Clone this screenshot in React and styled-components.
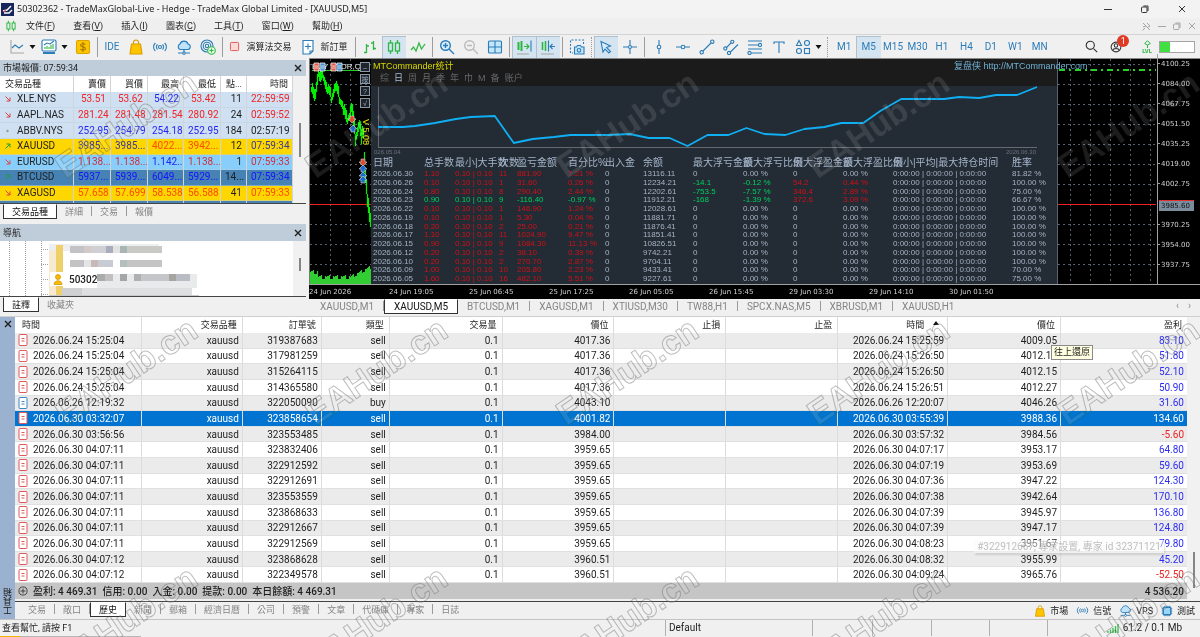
import React from "react";
import styled, { createGlobalStyle, css } from "styled-components";

const ui = `Roboto, "Noto Sans CJK TC", sans-serif`;
const chartFont = `"Liberation Sans", "Noto Sans CJK SC", sans-serif`;
const blue = "#2b7cb8";
const green = "#2db742";

const Global = createGlobalStyle`
  * { box-sizing: border-box; }
  body { margin: 0; background: #f0f0f0; color: #1e1e1e; font: 10px/12px ${ui}; overflow-x: hidden; }
  button, input { font: inherit; color: inherit; }
  button { border: 0; padding: 0; margin: 0; background: none; }
  svg { display: block; flex: none; }
  table { border-collapse: separate; border-spacing: 0; }
  th { font-weight: 400; }
`;

const Window = styled.div`
  position: relative;
  min-height: 100vh;
  display: flex;
  flex-direction: column;
  overflow: hidden;
`;

/* ---------- title, menu ---------- */
const TitleBar = styled.header`
  display: flex;
  align-items: center;
  height: 18px;
  padding: 0 14px 0 1px;
  gap: 3px;
  background: #f3f3f3;
  h1 { margin: 0; font: 9px/16px "Noto Sans", sans-serif; flex: 1; }
`;
const WinButtons = styled.div`
  display: flex;
  gap: ${(p) => p.$gap}px;
  color: ${(p) => p.$color};
`;
const MenuBar = styled.nav`
  display: flex;
  align-items: center;
  height: 16px;
  padding: 0 4px 0 5px;
  background: #efefef;
  font-size: 9px;
`;
const MenuButton = styled.button`
  margin-left: ${(p) => (p.$first ? 9 : 18)}px;
  line-height: 14px;
`;
const Push = styled.div`flex: 1;`;

/* ---------- toolbar ---------- */
const Toolbar = styled.div`
  display: flex;
  align-items: center;
  height: 24px;
  padding: 0 5px 0 6px;
  border-top: 1px solid #d4d4d4;
  background: #f0f0f0;
  color: ${blue};
`;
const ToolButton = styled.button`
  display: flex;
  align-items: center;
  justify-content: center;
  gap: ${(p) => p.$gap || 0}px;
  width: ${(p) => p.$w || 24}px;
  height: 22px;
  flex: ${(p) => (p.$grow ? "1 1 0" : "none")};
  white-space: nowrap;
  font-size: ${(p) => (p.$dark ? 9 : 10)}px;
  color: ${(p) => (p.$dark ? "#1e1e1e" : blue)};
  ${(p) => p.$on && css`background: #d5e4f1; box-shadow: inset 1px 1px 0 #b3bfcb;`}
`;
const Sep = styled.span`
  width: 1px;
  height: 20px;
  margin: 0 2px;
  border-left: 1px ${(p) => (p.$dots ? "dotted" : "solid")} #9c9c9c;
`;
const Frames = styled.div`
  display: flex;
  width: 220px;
  margin-left: 2px;
`;
const Account = styled.div`
  position: relative;
  margin: 0 20px 0 12px;
  color: #333;
`;
const Badge = styled.span`
  position: absolute;
  left: 7px;
  top: -6px;
  width: 12px;
  height: 12px;
  border-radius: 6px;
  background: #e03a24;
  color: #fff;
  text-align: center;
  font-size: 9px;
`;
const Level = styled.div`
  display: flex;
  flex-direction: column;
  align-items: center;
  margin-right: 7px;
  color: ${green};
  font: bold 6px/6px ${ui};
`;
const Battery = styled.div`
  width: 36px;
  height: 12px;
  border: 1px solid #a5a5a5;
  background: linear-gradient(90deg, #41df41 10px, #fff 10px);
`;

/* ---------- middle area ---------- */
const Main = styled.main`
  display: flex;
  height: 258px;
`;
const Side = styled.aside`
  width: 306px;
  margin-right: 3px;
  display: flex;
  flex-direction: column;
  padding-top: 2px;
`;
const PanelTitle = styled.h2`
  display: flex;
  align-items: center;
  justify-content: space-between;
  height: ${(p) => p.$h}px;
  margin: 0;
  padding: 0 4px 0 3px;
  background: #bfcddb;
  font: 9px/14px ${ui};
`;
const PanelBody = styled.div`
  display: flex;
  height: ${(p) => p.$h}px;
  overflow: hidden;
  background: #fff;
  border-bottom: 1px solid #444;
`;
const Track = styled.div`
  width: 13px;
  flex: none;
  background: #f1f1f1;
  padding: ${(p) => p.$top}px 0 0 6px;
`;
const Thumb = styled.div`
  width: 2px;
  height: ${(p) => p.$h}px;
  background: #858585;
`;
const Quotes = styled.table`
  width: 293px;
  height: 141px;
  flex: none;
  table-layout: fixed;
  th, td {
    padding: 0 4px;
    text-align: right;
    overflow: hidden;
    white-space: nowrap;
    line-height: 14px;
    border-right: 1px solid #d4d4d4;
  }
  th { height: 16px; font-size: 9px; background: #fff; }
  th:first-child, td:first-child { text-align: left; padding-left: 5px; }
`;
const QuoteRow = styled.tr`
  background: ${(p) => p.$bg};
  td { border-bottom: 1px solid rgba(190, 205, 220, 0.5); }
`;
const SymbolCell = styled.span`
  display: flex;
  align-items: center;
  gap: 6px;
`;
const Num = styled.td`color: ${(p) => p.$c};`;
const Tabs = styled.div`
  display: flex;
  align-items: flex-start;
  height: ${(p) => p.$h}px;
  padding-left: ${(p) => p.$left}px;
  font-size: ${(p) => p.$size}px;
`;
const Tab = styled.button`
  position: relative;
  height: 15px;
  padding: 0 ${(p) => p.$pad || 8}px;
  color: #858585;
  line-height: 14px;
  border-right: 1px solid transparent;
  white-space: nowrap;
  &:not(:last-of-type)::after {
    content: "";
    position: absolute;
    right: -1px;
    top: 2px;
    height: 10px;
    border-right: 1px solid #9a9a9a;
  }
  ${(p) => p.$on && css`
    background: #fff;
    color: #111;
    border: 1px solid #333;
    border-top-color: #fff;
    &::after { display: none; }
  `}
`;

/* ---------- chart ---------- */
const ChartColumn = styled.section`
  flex: 1;
  min-width: 0;
  display: flex;
  flex-direction: column;
  border-top: 1px solid #888;
`;
const Chart = styled.div`
  display: grid;
  grid-template-columns: 62px minmax(0, 1fr) 99px 43px;
  grid-template-rows: 225px 15px;
  background: #000;
`;
const LeftPlot = styled.div`
  position: relative;
  border-left: 1px solid #777;
`;
const PlotButtons = styled.div`
  position: absolute;
  right: 1px;
  top: 3px;
  display: grid;
  gap: 2px;
  button {
    width: 10px;
    height: 10px;
    border: 1px solid #8b98a8;
    background: #1d242c;
    color: #9fb0c4;
    font: 7px/7px ${chartFont};
  }
`;
const Version = styled.span`
  position: absolute;
  right: 1px;
  top: 60px;
  writing-mode: vertical-rl;
  color: #e6e600;
  font: 9px/9px ${chartFont};
`;
const Stats = styled.div`
  display: flex;
  flex-direction: column;
  height: 225px;
  background: #232b34;
  border-right: 1px solid #59626e;
  font-family: ${chartFont};
  clip-path: inset(0 -40px 0 0);
`;
const StatsHead = styled.div`
  height: 27px;
  flex: none;
  padding: 2px 0 0 2px;
  background: #1b1b1b;
`;
const StatsTitle = styled.div`
  display: flex;
  justify-content: space-between;
  font-size: 9px;
  line-height: 11px;
  color: #d8d800;
  a { width: 103px; color: #6fb0d4; text-decoration: none; white-space: nowrap; }
`;
const StatsModes = styled.div`
  display: flex;
  gap: 5px;
  padding-left: 7px;
  color: #66686c;
  font-size: 9px;
  line-height: 13px;
  button:nth-child(2) { color: #a9bdd4; }
`;
const Dates = styled.div`
  display: flex;
  justify-content: space-between;
  padding: 0 21px 0 3px;
  color: #68727f;
  font-size: 6px;
  line-height: 8px;
`;
const StatsTable = styled.table`
  width: 100%;
  table-layout: fixed;
  color: #a5b3c4;
  font-size: 8px;
  line-height: 8px;
  th, td { padding: 0; text-align: left; white-space: nowrap; }
  td { height: 9px; }
  tr:nth-child(4n) td { height: 8px; }
  th { height: 13px; font-size: 10px; line-height: 13px; color: #a5b5ca; }
  th:first-child, td:first-child { padding-left: 2px; }
`;
const Tone = styled.td`color: ${(p) => p.$c};`;
const PriceAxis = styled.div`
  display: flex;
  flex-direction: column;
  border-left: 1px solid #a0a0a0;
  color: #d0d0d0;
  font: 7px/20px "DejaVu Sans", sans-serif;
  margin-top: -5px;
  span::before { content: ""; display: inline-block; width: 2px; height: 1px; margin-right: 1px; background: #a0a0a0; vertical-align: 2px; }
`;
const LastPrice = styled.b`
  font-weight: 400;
  line-height: 10px;
  margin: 6px 6px 4px 1px;
  padding-left: 2px;
  background: #7b8c9c;
  border-top: 1px solid #e03030;
  color: #111;
`;
const TimeAxis = styled.div`
  grid-column: 1 / -1;
  display: flex;
  border-top: 1px solid #a0a0a0;
  color: #d0d0d0;
  font: 7px/14px "DejaVu Sans", sans-serif;
  span { width: 80px; }
`;
const Arrows = styled.div`
  margin-left: auto;
  display: flex;
  gap: 9px;
  padding: 1px 9px 0 0;
  color: #8c8c8c;
`;

/* ---------- toolbox ---------- */
const Toolbox = styled.section`
  display: flex;
  height: 303px;
  border-top: 1px solid #cfcfcf;
`;
const Strip = styled.div`
  width: 15px;
  display: flex;
  flex-direction: column;
  justify-content: space-between;
  align-items: center;
  padding: 3px 0 4px;
  background: #9ab2cf;
  span { writing-mode: vertical-rl; transform: rotate(180deg); font-size: 9px; }
`;
const ToolboxBody = styled.div`
  flex: 1;
  min-width: 0;
  display: flex;
  flex-direction: column;
`;
const Scroller = styled.div`
  display: flex;
  background: #fff;
`;
const History = styled.table`
  flex: 1;
  table-layout: fixed;
  height: 282px;
  th, td {
    padding: 0 3px;
    text-align: right;
    white-space: nowrap;
    line-height: 13px;
    border-right: 1px solid #dcdcdc;
  }
  th { height: 16px; font-size: 9px; background: #fff; position: relative; padding-right: 5px; }
  th:first-child { text-align: left; padding-left: 7px; }
  td:first-child { text-align: left; }
  th:last-child, td:last-child { border-right: 0; }
`;
const SortMark = styled.span`
  display: inline-block;
  margin: 0 3px 3px 9px;
  border: 3px solid transparent;
  border-top: 0;
  border-bottom: 4px solid #111;
`;
const Deal = styled.tr`
  background: ${(p) => (p.$sel ? "#0173d0" : p.$alt ? "#ebebeb" : "#fff")};
  color: ${(p) => (p.$sel ? "#fff" : "inherit")};
  td { border-bottom: 1px solid #e0e0e0; position: relative; }
`;
const TimeCell = styled.span`
  display: flex;
  align-items: center;
  gap: 5px;
`;
const Profit = styled.td`
  color: ${(p) => (p.$sel ? "#fff" : p.$neg ? "#f02020" : "#2c2cf4")};
`;
const Total = styled.tr`
  background: #c5c5c5;
  font-weight: 500;
  td { height: 16px; border: 0; }
`;
const Tip = styled.div`
  position: absolute;
  z-index: 2;
  left: -10px;
  top: 28px;
  height: 15px;
  padding: 0 2px;
  border: 1px solid #8a8a8a;
  background: #ffffe1;
  font-size: 9px;
  line-height: 13px;
`;
const Ghost = styled.div`
  position: absolute;
  z-index: 2;
  left: 26px;
  top: 4px;
  padding: 0 3px;
  line-height: 13px;
  background: rgba(250, 250, 250, 0.5);
  box-shadow: 1px 2px 2px rgba(0, 0, 0, 0.12);
  color: rgba(150, 150, 150, 0.6);
`;
const BottomBar = styled.div`
  display: flex;
  margin-top: 2px;
  border-top: 1px solid #444;
  background: #f0f0f0;
`;
const Links = styled.div`
  margin-left: auto;
  display: flex;
  align-items: center;
  gap: 8px;
  padding-right: 5px;
  font-size: 9px;
  button { display: flex; align-items: center; gap: 4px; white-space: nowrap; }
`;
const StatusBar = styled.footer`
  display: flex;
  height: 17px;
  border-top: 1px solid #c4c4c4;
  line-height: 16px;
  font-size: 9px;
  > * { border-left: 1px solid #b0b0b0; padding-left: 3px; }
  > :first-child { flex: 1; border: 0; padding-left: 2px; }
`;
const StatusCell = styled.div`
  width: ${(p) => p.$w}px;
  display: flex;
  align-items: center;
  gap: 4px;
  padding-right: ${(p) => p.$end || 0}px;
  font-size: 10px;
`;
const EdgeStrip = styled.div`
  height: 1px;
  background: linear-gradient(90deg, #f5b400 20px, #b8b8b8 20px, #b8b8b8 141px, #f0f0f0 141px);
`;
const Watermark = styled.svg`
  position: absolute;
  inset: 0;
  z-index: 5;
  pointer-events: none;
  mix-blend-mode: ${(p) => p.$mode};
  text { font: bold 34px "Liberation Sans", sans-serif; text-anchor: middle; dominant-baseline: central; }
`;

/* ---------- icons ---------- */
const Icon = ({ s = 16, c = blue, f = "none", w = 1.1, children }) => (
  <svg width={s} height={s} viewBox="0 0 16 16" fill={f} stroke={c} strokeWidth={w} aria-hidden="true">{children}</svg>
);
const Caret = () => (
  <svg width="7" height="4" viewBox="0 0 7 4" fill="#111"><path d="M.5 0h6L3.500 4z" /></svg>
);
const Cross = ({ s = 8, w = 1.4 }) => (
  <svg width={s} height={s} viewBox="0 0 8 8" stroke="currentColor" strokeWidth={w}><path d="M1 1l6 6M7 1L1 7" /></svg>
);
const CloseButton = () => <button aria-label="關閉"><Cross /></button>;
const Minimize = () => <svg width="8" height="8" viewBox="0 0 8 8" stroke="currentColor"><path d="M0 4.500h8" /></svg>;
const Restore = () => (
  <svg width="8" height="8" viewBox="0 0 8 8" fill="none" stroke="currentColor"><rect x=".5" y="2" width="5.500" height="5.500" rx="1" /><path d="M2.500 1h4.500v5" /></svg>
);
const Bag = ({ s = 16 }) => (
  <Icon s={s} c="#d99a00"><path d="M5.500 6V3.500a2.500 2.500 0 015 0V6" /><path fill="#fdc500" d="M3.500 5h9l1.500 10H2z" /></Icon>
);
const Signal = ({ s = 16 }) => (
  <Icon s={s}><circle cx="8" cy="8" r="1.500" /><path d="M5.500 5.500a3.500 3.500 0 000 5M10.500 5.500a3.500 3.500 0 010 5M3.300 4a5.500 5.500 0 000 8M12.700 4a5.500 5.500 0 010 8" /></Icon>
);
const Cloud = ({ s = 16 }) => (
  <Icon s={s}><path fill="#bfe3fa" d="M4 10.500a3 3 0 010-5.500 4.200 4.200 0 018 0 2.800 2.800 0 010 5.500z" /><path d="M8 10.500v3M2 14h4M10 14h4" /><circle cx="8" cy="14" r="1.300" /></Icon>
);
const Chip = () => (
  <Icon s={12}><rect x="3" y="3" width="10" height="10" rx="1" fill="#9bd5f7" strokeWidth="1.800" /><path d="M5 3V1M8 3V1M11 3V1M5 15v-2M8 15v-2M11 15v-2M1 5h2M1 8h2M1 11h2M13 5h2M13 8h2M13 11h2" /></Icon>
);
const Candles = ({ s = 16 }) => (
  <Icon s={s} c={green} w={1.3}><rect x="2.500" y="4" width="4" height="8" /><rect x="9.500" y="4" width="4" height="8" /><path d="M4.500 1v3M4.500 12v3M11.500 1v3M11.500 12v3" /></Icon>
);
const DealIcon = ({ c }) => (
  <svg width="10" height="12" viewBox="0 0 10 12" fill="#fff" stroke={c}><rect x="1" y=".5" width="8" height="11" rx="1" /><path d="M3.500 4.500h3M3.500 7h3" /></svg>
);
const Direction = ({ d }) => (
  <svg width="6" height="6" viewBox="0 0 6 6" fill="none" stroke={d === "up" ? "#1c9f3a" : "#e04040"}>
    {d === "up" && <path d="M.5 5.500L5 1M1.500 1H5v3.500" />}
    {d === "down" && <path d="M.5 .5L5 5M1.500 5H5V1.500" />}
    {d === "flat" && <circle cx="2.500" cy="3" r="1.200" fill="#999" stroke="none" />}
  </svg>
);

/* ---------- data ---------- */
const R = "#f02424", B = "#2424f4", K = "#1e1e1e";
const quotes = [
  ["down", "XLE.NYS", "#cfe0f2", [["53.51", R], ["53.62", R], ["54.22", B], ["53.42", R], ["11", K], ["22:59:59", R]]],
  ["down", "AAPL.NAS", "#cfe0f2", [["281.24", R], ["281.48", R], ["281.54", R], ["280.92", R], ["24", K], ["02:59:52", R]]],
  ["flat", "ABBV.NYS", "#cfe0f2", [["252.95", B], ["254.79", B], ["254.18", B], ["252.95", B], ["184", K], ["02:57:19", K]]],
  ["up", "XAUUSD", "#ffd700", [["3985...", "#3a3a9a"], ["3985...", "#3a3a9a"], ["4022...", "#ff4a00"], ["3942...", "#ff4a00"], ["12", K], ["07:59:34", "#3a3a9a"]]],
  ["down", "EURUSD", "#87cefa", [["1.138...", "#d03040"], ["1.138...", "#d03040"], ["1.142...", B], ["1.138...", "#d03040"], ["1", K], ["07:59:33", "#d03040"]]],
  ["up", "BTCUSD", "#4682b4", [["5937...", "#1414ff"], ["5939...", "#1414ff"], ["6049...", "#1414ff"], ["5929...", "#1414ff"], ["14...", K], ["07:59:34", "#1414ff"]]],
  ["down", "XAGUSD", "#ffd700", [["57.658", "#ff4a00"], ["57.699", "#ff4a00"], ["58.538", "#ff4a00"], ["56.588", "#ff4a00"], ["41", K], ["07:59:33", "#ff4a00"]]],
  ["", "\u00a0", "#4682b4", [["", K], ["", K], ["", K], ["", K], ["", K], ["", K]]],
];

const z = ["0", "0.00 %", "0", "0.00 %"];
const stats = [
  ["2026.06.30", "1.10", "11", "881.90", "7.21 %", "13116.11", z, "81.82 %"],
  ["2026.06.26", "0.10", "1", "31.60", "0.26 %", "12234.21", ["-14.1", "-0.12 %", "54.2", "0.44 %"], "100.00 %"],
  ["2026.06.24", "0.80", "8", "290.40", "2.44 %", "12202.61", ["-753.5", "-7.57 %", "346.4", "2.89 %"], "75.00 %"],
  ["2026.06.23", "0.90", "9", "-116.40", "-0.97 %", "11912.21", ["-168", "-1.39 %", "372.6", "3.09 %"], "66.67 %"],
  ["2026.06.22", "0.10", "1", "146.90", "1.24 %", "12028.61", z, "100.00 %"],
  ["2026.06.19", "0.10", "1", "5.30", "0.04 %", "11881.71", z, "100.00 %"],
  ["2026.06.18", "0.20", "2", "25.00", "0.21 %", "11876.41", z, "100.00 %"],
  ["2026.06.17", "1.10", "11", "1024.90", "9.47 %", "11851.41", z, "100.00 %"],
  ["2026.06.15", "0.90", "9", "1084.30", "11.13 %", "10826.51", z, "100.00 %"],
  ["2026.06.12", "0.20", "2", "38.10", "0.39 %", "9742.21", z, "100.00 %"],
  ["2026.06.10", "0.20", "2", "270.70", "2.87 %", "9704.11", z, "100.00 %"],
  ["2026.06.09", "1.00", "10", "205.80", "2.23 %", "9433.41", z, "70.00 %"],
  ["2026.06.05", "1.60", "16", "482.10", "5.51 %", "9227.61", z, "75.00 %"],
  ["2026.06.04", "0.90", "9", "-158.70", "-1.78 %", "8745.51", z, "50.00 %"],
];
const statHeads = ["日期", "总手数", "最小|大手数", "次数", "盈亏金额", "百分比%", "出入金", "余额", "最大浮亏金额", "最大浮亏比例", "最大浮盈金额", "最大浮盈比例", "最小|平均|最大持仓时间", "胜率"];
const statCols = [53, 31, 44, 18, 51, 37, 38, 50, 50, 50, 50, 50, 119];

const deals = [
  ["2026.06.24 15:25:04", "319387683", "sell", "4017.36", "2026.06.24 15:25:59", "4009.05", "83.10"],
  ["2026.06.24 15:25:04", "317981259", "sell", "4017.36", "2026.06.24 15:26:50", "4012.18", "51.80"],
  ["2026.06.24 15:25:04", "315264115", "sell", "4017.36", "2026.06.24 15:26:50", "4012.15", "52.10"],
  ["2026.06.24 15:25:04", "314365580", "sell", "4017.36", "2026.06.24 15:26:51", "4012.27", "50.90"],
  ["2026.06.26 12:19:32", "322050090", "buy", "4043.10", "2026.06.26 12:20:07", "4046.26", "31.60"],
  ["2026.06.30 03:32:07", "323858654", "sell", "4001.82", "2026.06.30 03:55:39", "3988.36", "134.60"],
  ["2026.06.30 03:56:56", "323553485", "sell", "3984.00", "2026.06.30 03:57:32", "3984.56", "-5.60"],
  ["2026.06.30 04:07:11", "323832406", "sell", "3959.65", "2026.06.30 04:07:17", "3953.17", "64.80"],
  ["2026.06.30 04:07:11", "322912592", "sell", "3959.65", "2026.06.30 04:07:19", "3953.69", "59.60"],
  ["2026.06.30 04:07:11", "322912691", "sell", "3959.65", "2026.06.30 04:07:36", "3947.22", "124.30"],
  ["2026.06.30 04:07:11", "323553559", "sell", "3959.65", "2026.06.30 04:07:38", "3942.64", "170.10"],
  ["2026.06.30 04:07:11", "323868633", "sell", "3959.65", "2026.06.30 04:07:39", "3945.97", "136.80"],
  ["2026.06.30 04:07:11", "322912667", "sell", "3959.65", "2026.06.30 04:07:39", "3947.17", "124.80"],
  ["2026.06.30 04:07:11", "322912569", "sell", "3959.65", "2026.06.30 04:08:23", "3951.67", "79.80"],
  ["2026.06.30 04:07:12", "323868628", "sell", "3960.51", "2026.06.30 04:08:32", "3955.99", "45.20"],
  ["2026.06.30 04:07:12", "322349578", "sell", "3960.51", "2026.06.30 04:09:24", "3965.76", "-52.50"],
];
const dealHeads = ["時間", "交易品種", "訂單號", "類型", "交易量", "價位", "止損", "止盈", "時間", "價位", "盈利"];
const dealCols = [127, 101, 79, 68, 113, 112, 112, 112, 110, 113, 126];

/* ---------- drawings ---------- */
const trend = [[1, 29], [4, 39], [8, 12], [10, 20], [13, 16], [16, 28], [21, 38], [25, 26], [29, 38], [32, 46], [36, 60], [39, 56], [41, 47], [43, 62], [45, 78], [49, 64], [51, 80], [53, 72], [54, 97], [55, 116], [57, 140], [59, 158], [61, 170]];
const jag = [0, 4, -3, 2, -4, 2, 3, -3];
function priceBars() {
  let d = "";
  for (let x = 1; x < 62; x++) {
    const k = trend.findIndex((p) => p[0] >= x);
    const a = trend[Math.max(0, k - 1)], b = trend[k];
    const t = b[0] === a[0] ? 0 : (x - a[0]) / (b[0] - a[0]);
    const slope = Math.min(8, Math.abs(b[1] - a[1]) / Math.max(1, b[0] - a[0]));
    const y = Math.round(a[1] + (b[1] - a[1]) * t);
    const j = jag[(x * 5) % 8];
    d += `M${x}.5 ${Math.round(y - 3 - slope / 2 + j)}V${Math.round(y + 3 + slope / 2 + (j >> 1))}`;
  }
  return d;
}
function volumeBars() {
  let d = "";
  for (let x = 0; x < 62; x++) {
    const base = x < 8 ? 10 : x < 40 ? 5 : 5 + (x - 40) / 2;
    d += `M${x}.5 225v-${Math.round(base + (jag[(x * 3) % 8] + 3) / 2)}`;
  }
  return d;
}
const Grid = ({ w, xs }) => (
  <path
    stroke="#56606c" strokeDasharray="2 3" fill="none"
    d={Array.from({ length: 11 }, (_, i) => `M0 ${i * 20 + 5}.5H${w}`).join("") + xs.map((x) => `M${x}.5 0V225`).join("")}
  />
);
const Arrow = ({ x, y, c, up }) => (
  <path transform={`translate(${x} ${y})`} fill={c} stroke="#cfd8e4" strokeWidth=".6" d={up ? "M0 -4L4 0H2V3H-2V0H-4Z" : "M0 4L4 0H2V-3H-2V0H-4Z"} />
);

const LeftDrawing = () => (
  <svg width="61" height="225" viewBox="0 0 61 225">
    <Grid w={61} xs={[20, 40]} />
    <path d="M0 145.500h61" stroke="#f02020" />
    <path d="M2 11.500h50" stroke="#28c828" />
    <path d={priceBars()} stroke="#00f000" strokeWidth="1.200" />
    <path d={volumeBars()} stroke="#32cd32" strokeWidth="1.200" />
    <text x="2" y="10" fill="#e8e8e8" fontFamily="Liberation Sans" fontSize="8">BUY STOR,Q</text>
    {[[4, "#e05a4a"], [10, "#4a90d0"], [21, "#e05a4a"], [27, "#4a90d0"]].map(([x, c]) => (
      <path key={x} d={`M${x} 4h5v8h-5zM${x + 1} 7h3M${x + 1} 9h3`} fill={c} stroke="#fff" strokeWidth=".7" />
    ))}
    <Arrow x={42} y={60} c="#e04a2a" />
    <Arrow x={43} y={70} c="#1e6ac8" up />
    <Arrow x={53} y={103} c="#e04a2a" />
    <Arrow x={53} y={110} c="#1e6ac8" up />
    <Arrow x={53} y={117} c="#1e6ac8" up />
    <Arrow x={53} y={121} c="#1e6ac8" up />
  </svg>
);
const Equity = () => (
  <svg width="100%" height="62" viewBox="0 0 687 62" preserveAspectRatio="none" fill="none">
    <path d="M7.500 1V62M7 61.500H667" stroke="#66696e" />
    <path
      stroke="#10aef2" strokeWidth="1.800" strokeLinejoin="round"
      d="M7 41H32L44 40 64 37 85 33 100 31 124 30 143 57 162 53 183 51 200 49H238L259 48 278 52H299L317 60 337 49H358L376 42 394 48 415 49 434 43 454 41 471 37H493L510 25 531 13H574L589 11 609 12 626 9H647L667 1"
    />
  </svg>
);
const RightDrawing = () => (
  <svg width="99" height="225" viewBox="0 0 99 225">
    <Grid w={98} xs={[12, 32, 52, 72, 92]} />
    <path d="M1 11h97" stroke="#28d028" strokeWidth="2" strokeDasharray="6 4 2 4" />
    <path d="M0 145.500h98" stroke="#f02020" />
  </svg>
);
const mosaic = [
  [49, 3, 110, 7, "#eceef0"], [49, 10, 14, 44, "#f7ead0"], [56, 4, 7, 52, "#efcf6a"],
  [70, 5, 14, 7, "#c3c3c5"], [84, 5, 7, 7, "#d2c9c8"], [91, 5, 15, 7, "#cfcfd4"], [106, 5, 7, 7, "#a9acbc"], [113, 5, 7, 7, "#e2e2e2"], [120, 5, 7, 7, "#a9b5b3"], [127, 5, 35, 7, "#c9c9c6"],
  [70, 19, 14, 7, "#c3c3c5"], [84, 19, 7, 7, "#e4e4e6"], [91, 19, 7, 7, "#c6b9b7"], [98, 19, 15, 7, "#c9cbd4"], [120, 19, 7, 7, "#b3bfbd"], [127, 19, 35, 7, "#c4c4c4"],
  [97, 33, 100, 14, "#e9eaec"], [97, 33, 8, 7, "#aaabad"], [105, 33, 8, 7, "#c3bebf"], [120, 33, 7, 7, "#a4a6a8"], [134, 33, 7, 7, "#b0b0b0"], [141, 33, 28, 7, "#c5c6ca"], [169, 33, 7, 7, "#a7a4a2"], [176, 33, 14, 7, "#b9bcc3"],
  [62, 47, 20, 8, "#cfd0d2"], [82, 47, 110, 8, "#dedfe1"], [49, 54, 150, 3, "#c9c9c9"],
];
const NavigatorTree = () => (
  <svg width="293" height="55" viewBox="0 0 293 55">
    <path d="M9.500 0v55M25.500 0v55M41.500 0v55M41 8.500h8M41 23.500h8M41 38.500h9M41 53.500h8" stroke="#a0a0a0" strokeDasharray="1 1" />
    {mosaic.map((m, i) => <rect key={i} x={m[0]} y={m[1]} width={m[2]} height={m[3]} fill={m[4]} />)}
    <rect x="50" y="31" width="16" height="14" fill="#fff" />
    <g fill="#f8bc00" stroke="#c88e00" strokeWidth=".7"><circle cx="58" cy="36" r="2.500" /><path d="M54 43.500c0-5 8-5 8 0z" /></g>
    <text x="69" y="42" fontFamily="Roboto" fontSize="10" fontWeight="500" fill="#222">50302</text>
  </svg>
);

const marks = [124, 371, 619].flatMap((y) => [126, 376, 627, 878, 1128].map((x) => [x, y]));
const Marks = (props) => marks.map(([x, y]) => (
  <text key={x + "-" + y} transform={`translate(${x} ${y}) rotate(-34)`} {...props}>EAHub.cn</text>
));

const frames = ["M1", "M5", "M15", "M30", "H1", "H4", "D1", "W1", "MN"];

function MainToolbar() {
  return (
    <Toolbar role="toolbar">
      <ToolButton $w={32} $gap={4} aria-label="圖表類型"><Icon><path d="M2 1v13h13" stroke="#a8a8a8" /><path d="M3 9l3-3 4 3 4-3" /></Icon><Caret /></ToolButton>
      <ToolButton $w={33} $gap={4} aria-label="指標"><Icon><rect x="1" y="1" width="14" height="11" rx="1.500" fill="#fff" /><path d="M2 14h12" strokeWidth="2" /><path d="M3 6l3-2 3 1 4-3" /><path d="M4 10V8M6 10V7M8 10V8M10 10V6M12 10V5" stroke={green} /></Icon><Caret /></ToolButton>
      <ToolButton aria-label="報價"><Icon c="#dba400"><rect x="1.500" y="1.500" width="13" height="13" rx="1.500" fill="#fdc500" /><path d="M10.500 5.500c-1-1.200-5-1-5 .8s5 1.300 5 3.200-4 2-5.200.5M8 3v10" stroke="#a87500" /></Icon></ToolButton>
      <Sep />
      <ToolButton>IDE</ToolButton>
      <ToolButton aria-label="市場"><Bag /></ToolButton>
      <ToolButton aria-label="信號"><Signal /></ToolButton>
      <ToolButton aria-label="VPS"><Cloud /></ToolButton>
      <ToolButton aria-label="網路"><Icon><circle cx="7" cy="7" r="6" /><circle cx="7" cy="7" r="3.800" /><circle cx="7" cy="7" r="1.700" /><circle cx="11.500" cy="11.500" r="3.800" fill="#e4ffe8" stroke={green} /><path d="M11.500 9.500v4M9.500 11.500h4" stroke={green} /></Icon></ToolButton>
      <Sep />
      <ToolButton $w={70} $gap={5} $dark><Icon s={13} c="#e05050"><rect x="3" y="3" width="10" height="10" rx="1" fill="#ffd9d6" /></Icon>演算法交易</ToolButton>
      <ToolButton $w={58} $gap={4} $dark><Icon><path fill="#fff" d="M3 1.500h10V12l-3 3H3z" /><path d="M8 4.500v6M5 7.500h6M10 15v-3h3" /></Icon>新訂單</ToolButton>
      <Sep />
      <ToolButton aria-label="柱狀圖"><Icon c={green} w={1.3}><path d="M4.500 5v9M2 13.500h2.500M4.500 7H7M11.500 2v9M9 4h2.500M11.500 9.500H14" /></Icon></ToolButton>
      <ToolButton $on aria-label="蠟燭圖"><Candles /></ToolButton>
      <ToolButton aria-label="折線圖"><Icon c={green} w={1.3}><path d="M1 11l2.500-3L6 12l3-8 2.500 6L15 5" /></Icon></ToolButton>
      <Sep />
      <ToolButton aria-label="放大"><Icon w={1.4}><circle cx="6.500" cy="6.500" r="4.800" fill="#d8eefc" /><path d="M10 10l5 5M4 6.500h5M6.500 4v5" /></Icon></ToolButton>
      <ToolButton aria-label="縮小"><Icon w={1.4} c="#bcbcbc"><circle cx="6.500" cy="6.500" r="4.800" /><path d="M10 10l5 5M4 6.500h5" /></Icon></ToolButton>
      <ToolButton aria-label="平鋪"><Icon><rect x="1.500" y="2" width="13" height="12" rx="1" fill="#c5e6fa" /><path d="M8 2v12M1.500 8h13" /></Icon></ToolButton>
      <Sep />
      <ToolButton $on aria-label="自動滾動"><Icon><path d="M2.500 3v8M5.500 2v10" stroke={green} strokeWidth="2" /><path d="M8 7.500h5M10.500 5l2.500 2.500-2.500 2.500" stroke={green} /><path d="M15 1.500v11" /><path d="M1 15h12" stroke="#aaa" /></Icon></ToolButton>
      <ToolButton $on aria-label="圖表移動"><Icon><path d="M2.500 3v8M5.500 2v10" stroke={green} strokeWidth="1.600" /><path d="M8.500 1.500v11M10 7.500h5M12.500 5L10 7.500l2.500 2.500" /><path d="M1 15h13" stroke="#aaa" /></Icon></ToolButton>
      <Sep />
      <ToolButton aria-label="截圖"><Icon><path d="M14.500 5V1h-13v13H4" strokeDasharray="2 1.500" /><path fill="#c5e6fa" d="M5.500 8h2l1-1.500h3l1 1.500h2.500v7H5.500z" /><circle cx="10" cy="11.300" r="1.800" /></Icon></ToolButton>
      <Sep $dots />
      <ToolButton $on aria-label="游標"><Icon><path fill="#d8eefc" d="M3 2.500l9.500 4.500-4 1.500 4 4-1.500 1.500-4-4L5 13z" /></Icon></ToolButton>
      <ToolButton aria-label="十字線"><Icon><path d="M8 1v5M8 10v5M1 8h5M10 8h5" /><circle cx="8" cy="8" r="1.500" /></Icon></ToolButton>
      <Sep />
      <ToolButton aria-label="垂直線"><Icon><path d="M8 1v5M8 10v5" /><circle cx="8" cy="8" r="1.800" /></Icon></ToolButton>
      <ToolButton aria-label="水平線"><Icon><path d="M1 8h5M10 8h5" /><circle cx="8" cy="8" r="1.800" /></Icon></ToolButton>
      <ToolButton aria-label="趨勢線"><Icon><path d="M4 12l8-8" /><circle cx="2.700" cy="13.300" r="1.700" /><circle cx="13.300" cy="2.700" r="1.700" /></Icon></ToolButton>
      <ToolButton aria-label="等距通道"><Icon><path d="M3.500 8.500L8 4M7 13.500L15 5.500" /><circle cx="2.300" cy="9.500" r="1.600" /><circle cx="9.300" cy="2.800" r="1.600" /><circle cx="6" cy="14" r="1.600" /></Icon></ToolButton>
      <ToolButton aria-label="斐波那契"><Icon><path d="M1 2h14M1 6h10M1 10h14M4 14h11" /><circle cx="13" cy="6" r="1.600" /><circle cx="2.500" cy="14" r="1.600" /></Icon></ToolButton>
      <ToolButton aria-label="文字"><Icon><path d="M3 5V3h10v2M8 3v11" /></Icon></ToolButton>
      <ToolButton $w={34} $gap={4} aria-label="圖形"><Icon><path d="M4 1.500L6.500 6.500h-5z" /><circle cx="12" cy="4" r="2.500" /><circle cx="4" cy="12" r="2.500" /><rect x="9.500" y="9.500" width="5" height="5" /></Icon><Caret /></ToolButton>
      <Sep $dots />
      <Frames>{frames.map((f) => <ToolButton key={f} $grow $on={f === "M5"}>{f}</ToolButton>)}</Frames>
      <Push />
      <button aria-label="搜尋"><Icon s={13} c="#333" w={1.4}><circle cx="6.500" cy="6.500" r="5" /><path d="M10.500 10.500L15 15" /></Icon></button>
      <Account><Icon s={12} c="#333" w={1.4}><circle cx="8" cy="8" r="6.500" /><circle cx="8" cy="6" r="2.300" /><path d="M3.500 12.500c1-3.500 8-3.500 9 0" /></Icon><Badge>1</Badge></Account>
      <Level><svg width="7" height="8" viewBox="0 0 7 8" fill="none" stroke={green}><path d="M3.500 .7L6.300 3.500 3.500 5 .7 3.500zM3.500 5v3" /></svg>LVL</Level>
      <Battery />
    </Toolbar>
  );
}

function StatsRow({ row }) {
  const [date, lots, n, pl, pct, bal, dd, win] = row;
  const c = pl[0] === "-" ? "#00d060" : "#d01018";
  return (
    <tr>
      <td>{date}</td>
      <Tone $c={c}>{lots}</Tone>
      <Tone $c={c}>0.10 | 0.10</Tone>
      <Tone $c={c}>{n}</Tone>
      <Tone $c={c}>{pl}</Tone>
      <Tone $c={c}>{pct}</Tone>
      <td>0</td>
      <td>{bal}</td>
      {dd.map((v, i) => <Tone key={i} $c={dd === z ? "inherit" : i < 2 ? "#00d060" : "#d01018"}>{v}</Tone>)}
      <td>0:00:00 | 0:00:00 | 0:00:00</td>
      <td>{win}</td>
    </tr>
  );
}

export default function App() {
  return (
    <Window>
      <Global />
      <TitleBar>
        <svg width="13" height="13" viewBox="0 0 13 13"><rect width="13" height="13" fill="#16255c" /><path d="M2 8l4-1 4-4M3 10h5l3-3" stroke="#fff" strokeWidth="1.400" fill="none" /><path d="M2 9l3-2" stroke="#e04040" /></svg>
        <h1>50302362 - TradeMaxGlobal-Live - Hedge - TradeMax Global Limited - [XAUUSD,M5]</h1>
        <WinButtons $gap={29} $color="#333">
          <button aria-label="最小化"><Minimize /></button>
          <button aria-label="還原"><Restore /></button>
          <button aria-label="關閉"><Cross w={1} /></button>
        </WinButtons>
      </TitleBar>
      <MenuBar>
        <Candles s={12} />
        {[["文件", "F"], ["查看", "V"], ["插入", "I"], ["圖表", "C"], ["工具", "T"], ["窗口", "W"], ["幫助", "H"]].map(([t, k], i) => (
          <MenuButton key={k} $first={i === 0}>{t}(<u>{k}</u>)</MenuButton>
        ))}
        <Push />
        <WinButtons $gap={7} $color="#a5a5a5">
          <button aria-label="釘選"><svg width="9" height="9" viewBox="0 0 9 9" fill="none" stroke="currentColor"><path d="M1 1l7 7M5 1l3 3-2 1M1 5l3-1M3 6L.5 8.500" /></svg></button>
          <button aria-label="最小化圖表"><Minimize /></button>
          <button aria-label="還原圖表"><Restore /></button>
          <button aria-label="關閉圖表"><Cross w={1} /></button>
        </WinButtons>
      </MenuBar>
      <MainToolbar />

      <Main>
        <Side>
          <PanelTitle $h={16}>市場報價: 07:59:34<CloseButton /></PanelTitle>
          <PanelBody $h={128}>
            <Quotes>
              <colgroup>{[74, 37, 37, 36, 37, 26, 46].map((w, i) => <col key={i} width={w} />)}</colgroup>
              <thead><tr>{["交易品種", "賣價", "買價", "最高", "最低", "點...", "時間"].map((h) => <th key={h}>{h}</th>)}</tr></thead>
              <tbody>
                {quotes.map(([d, s, bg, cells], i) => (
                  <QuoteRow key={i} $bg={bg}>
                    <td><SymbolCell><Direction d={d} />{s}</SymbolCell></td>
                    {cells.map(([v, c], j) => <Num key={j} $c={c}>{v}</Num>)}
                  </QuoteRow>
                ))}
              </tbody>
            </Quotes>
            <Track $top={47}><Thumb $h={34} /></Track>
          </PanelBody>
          <Tabs $h={20} $left={3} $size={9}>
            <Tab $on>交易品種</Tab><Tab>詳細</Tab><Tab>交易</Tab><Tab>報價</Tab>
          </Tabs>
          <PanelTitle $h={17}>導航<CloseButton /></PanelTitle>
          <PanelBody $h={56}>
            <NavigatorTree />
            <Track $top={17}><Thumb $h={13} /></Track>
          </PanelBody>
          <Tabs $h={17} $left={3} $size={9}><Tab $on>註釋</Tab><Tab>收藏夾</Tab></Tabs>
        </Side>

        <ChartColumn>
          <Chart>
            <LeftPlot>
              <LeftDrawing />
              <PlotButtons><button>–</button><button>按</button><button>?</button><button>√</button></PlotButtons>
              <Version>V 5.08</Version>
            </LeftPlot>
            <Stats>
              <StatsHead>
                <StatsTitle><span>MTCommander统计</span><a href="#mtc">复盘侠 http://MTCommander.com</a></StatsTitle>
                <StatsModes>{["综", "日", "周", "月", "季", "年", "巾", "M", "备", "账户"].map((m) => <button key={m}>{m}</button>)}</StatsModes>
              </StatsHead>
              <Equity />
              <Dates><span>026.05.04</span><span>2026.06.30</span></Dates>
              <StatsTable>
                <colgroup>{statCols.map((w, i) => <col key={i} width={w} />)}<col /></colgroup>
                <thead><tr>{statHeads.map((h, i) => <th key={i}>{h}</th>)}</tr></thead>
                <tbody>{stats.map((r) => <StatsRow key={r[0]} row={r} />)}</tbody>
              </StatsTable>
            </Stats>
            <RightDrawing />
            <PriceAxis>
              {["4100.25", "4084.00", "4067.75", "4051.50", "4035.25", "4019.00", "4002.75"].map((p) => <span key={p}>{p}</span>)}
              <LastPrice>3985.60</LastPrice>
              {["3970.25", "3954.00", "3937.75"].map((p) => <span key={p}>{p}</span>)}
            </PriceAxis>
            <TimeAxis>
              {["24 Jun 2026", "24 Jun 19:05", "25 Jun 06:45", "25 Jun 17:25", "26 Jun 05:05", "26 Jun 15:45", "29 Jun 03:30", "29 Jun 14:10", "30 Jun 01:50"].map((t) => <span key={t}>{t}</span>)}
            </TimeAxis>
          </Chart>
          <Tabs $h={17} $left={2} $size={10}>
            {["XAUUSD,M1", "XAUUSD,M5", "BTCUSD,M1", "XAGUSD,M1", "XTIUSD,M30", "TW88,H1", "SPCX.NAS,M5", "XBRUSD,M1", "XAUUSD,H1"].map((t) => (
              <Tab key={t} $pad={9} $on={t === "XAUUSD,M5"}>{t}</Tab>
            ))}
            <Arrows><span>‹</span><span>›</span></Arrows>
          </Tabs>
        </ChartColumn>
      </Main>

      <Toolbox>
        <Strip><CloseButton /><span>工具箱</span></Strip>
        <ToolboxBody>
          <Scroller>
            <History>
              <colgroup>{dealCols.map((w, i) => <col key={i} width={w} />)}</colgroup>
              <thead>
                <tr>
                  {dealHeads.map((h, i) => (
                    <th key={i}>{h}{i === 8 && <SortMark />}{i === 10 && <Tip role="tooltip">往上還原</Tip>}</th>
                  ))}
                </tr>
              </thead>
              <tbody>
                {deals.map((d, i) => (
                  <Deal key={d[1]} $alt={i % 2 === 0} $sel={i === 5}>
                    <td><TimeCell><DealIcon c={d[2] === "buy" ? "#3a86c8" : "#e05858"} />{d[0]}</TimeCell></td>
                    <td>xauusd</td>
                    <td>{d[1]}</td>
                    <td>{d[2]}</td>
                    <td>0.1</td>
                    <td>{d[3]}</td>
                    <td />
                    <td />
                    <td>{d[4]}</td>
                    <td>{d[5]}{i === 13 && <Ghost>#322912667, 專家設置, 專家 id 32371121</Ghost>}</td>
                    <Profit $sel={i === 5} $neg={d[6][0] === "-"}>{d[6]}</Profit>
                  </Deal>
                ))}
                <Total>
                  <td colSpan={10}>
                    <TimeCell>
                      <Icon s={10} c="#333" w={1.4}><circle cx="8" cy="8" r="6.500" /><path d="M8 4v8M4 8h8" /></Icon>
                      盈利: 4 469.31&nbsp; 信用: 0.00&nbsp; 入金: 0.00&nbsp; 提款: 0.00&nbsp; 本日餘額: 4 469.31
                    </TimeCell>
                  </td>
                  <td>4 536.20</td>
                </Total>
              </tbody>
            </History>
            <Track $top={235}><Thumb $h={36} /></Track>
          </Scroller>
          <BottomBar>
            <Tabs $h={17} $left={5} $size={9}>
              {["交易", "敞口", "歷史", "新聞", "郵箱", "經濟日曆", "公司", "預警", "文章", "代碼庫", "專家", "日誌"].map((t) => (
                <Tab key={t} $on={t === "歷史"}>{t}</Tab>
              ))}
            </Tabs>
            <Links>
              <button><Bag s={12} />市場</button>
              <button><Signal s={13} />信號</button>
              <button><Cloud s={13} />VPS</button>
              <button><Chip />測試</button>
            </Links>
          </BottomBar>
        </ToolboxBody>
      </Toolbox>
      <StatusBar>
        <div>查看幫忙, 請按 F1</div>
        <StatusCell $w={147}>Default</StatusCell>
        <StatusCell $w={60} /><StatusCell $w={59} /><StatusCell $w={58} /><StatusCell $w={58} />
        <StatusCell $w={153} $end={18}>
          <Push />
          <svg width="12" height="9" viewBox="0 0 12 9" stroke={green} strokeWidth="1.400"><path d="M1 9V7M3.500 9V5.500M6 9V4M8.500 9V2M11 9V0" /></svg>
          <span>61.2 / 0.1 Mb</span>
        </StatusCell>
      </StatusBar>
      <EdgeStrip />
      <Watermark $mode="screen" width="100%" height="100%" aria-hidden="true"><Marks fill="#1c1c1c" /></Watermark>
      <Watermark $mode="darken" width="100%" height="100%" aria-hidden="true"><Marks fill="none" stroke="rgba(110,110,110,.45)" /></Watermark>
    </Window>
  );
}
